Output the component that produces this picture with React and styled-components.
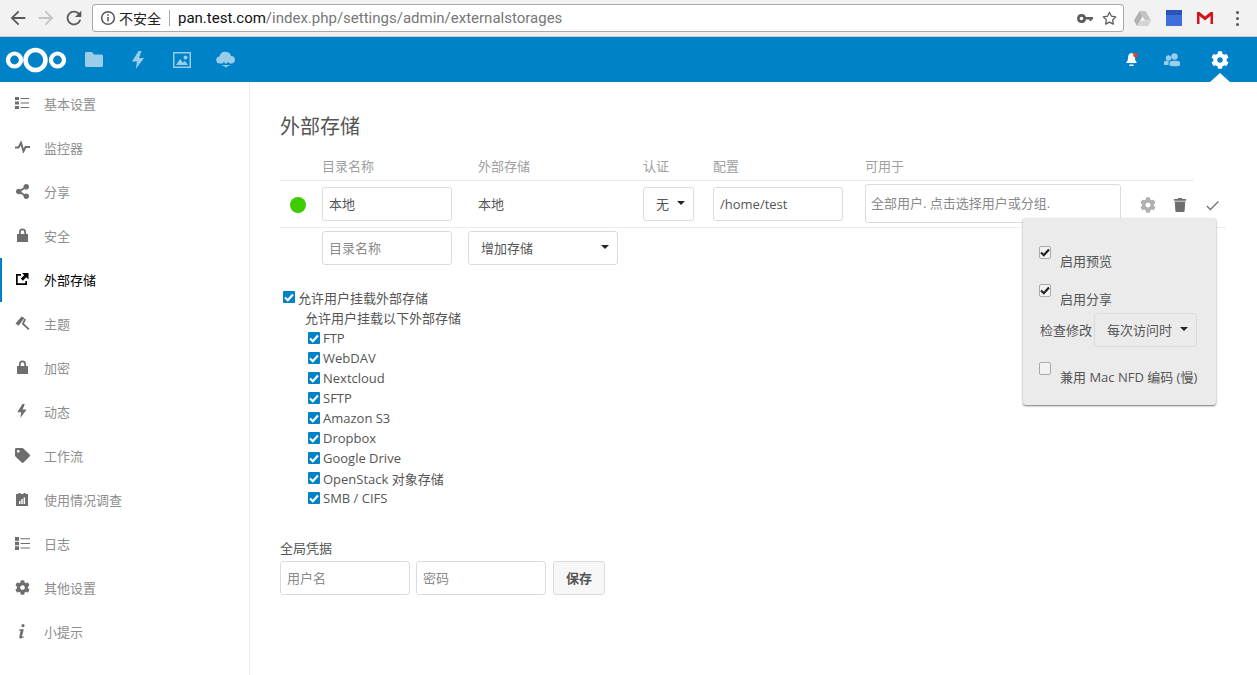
import React from "react";
import styled, { createGlobalStyle } from "styled-components";
import { FaCog, FaShareAlt, FaTag, FaTrash } from "react-icons/fa";
import { FiStar } from "react-icons/fi";
import { MdCheck, MdRefresh, MdArrowBack, MdArrowForward } from "react-icons/md";

const GlobalStyle = createGlobalStyle`
  html, body {
    margin: 0;
    padding: 0;
    background: #fff;
  }
  body {
    font-family: "Open Sans", "Noto Sans CJK SC", sans-serif;
    font-size: 13px;
    color: #555;
    overflow: hidden;
  }
  * {
    box-sizing: border-box;
  }
`;

const Page = styled.div`
  width: 1257px;
  height: 675px;
  display: flex;
  flex-direction: column;
  overflow: hidden;
`;

/* browser chrome */
const BrowserBar = styled.div`
  height: 37px;
  flex: none;
  display: flex;
  align-items: flex-start;
  padding: 4px 0 0 0;
  background: #f2f2f2;
  border-bottom: 1px solid #c9c9c9;
`;

const NavGroup = styled.div`
  width: 92px;
  flex: none;
  display: flex;
  padding-left: 4px;
`;

const NavButton = styled.div`
  width: 28px;
  height: 28px;
  flex: none;
  display: flex;
  align-items: center;
  justify-content: center;
  color: ${(props) => (props.$off ? "#c4c4c4" : "#5a5a5a")};
  font-size: 22px;
`;

const Omnibox = styled.div`
  width: 1032px;
  height: 28px;
  flex: none;
  display: flex;
  align-items: center;
  padding: 0 6px 0 7px;
  background: #fff;
  border: 1px solid #a9a9a9;
  border-radius: 3px;
  font-family: "Roboto", "Noto Sans CJK SC", sans-serif;
  font-size: 15px;
  color: #777;
`;

const SecurityText = styled.span`
  margin-left: 3px;
  color: #222;
  font-size: 14px;
  font-family: "Noto Sans CJK SC", sans-serif;
`;

const UrlDivider = styled.span`
  width: 1px;
  height: 16px;
  margin: 0 8px 0 8px;
  background: #a8a8a8;
`;

const UrlHost = styled.span`
  color: #111;
`;

const OmniboxIcons = styled.div`
  margin-left: auto;
  display: flex;
  align-items: center;
  gap: 9px;
  color: #5c5c5c;
`;

const Extensions = styled.div`
  flex: 1;
  height: 28px;
  display: flex;
  align-items: center;
  padding-left: 10px;
  gap: 15px;
`;

const Menu = styled.div`
  margin-left: 8px;
  display: flex;
  flex-direction: column;
  gap: 3px;
  span {
    width: 3px;
    height: 3px;
    border-radius: 50%;
    background: #555;
  }
`;

/* nextcloud header */
const Header = styled.header`
  height: 45px;
  flex: none;
  display: flex;
  align-items: center;
  background: #0082c9;
`;

const Logo = styled.div`
  width: 72px;
  flex: none;
  padding-left: 6px;
  display: flex;
  align-items: center;
`;

const AppIcon = styled.div`
  width: ${(props) => props.$width || 44}px;
  height: 45px;
  flex: none;
  display: flex;
  align-items: center;
  justify-content: center;
  color: #fff;
  opacity: ${(props) => (props.$dim ? 0.6 : 1)};
  font-size: 18px;
`;

const HeaderRight = styled.div`
  margin-left: auto;
  display: flex;
  padding-right: 15px;
`;

const SettingsButton = styled(AppIcon)`
  position: relative;
  margin-left: 4px;
  &::after {
    content: "";
    position: absolute;
    left: 12px;
    bottom: 0;
    border-left: 10px solid transparent;
    border-right: 10px solid transparent;
    border-bottom: 9px solid #fff;
  }
`;

const Body = styled.div`
  flex: 1;
  display: flex;
  min-height: 0;
`;

const Sidebar = styled.nav`
  width: 250px;
  flex: none;
  border-right: 1px solid #ebebeb;
`;

const NavItem = styled.a`
  height: 44px;
  display: flex;
  align-items: center;
  padding-bottom: 2px;
  border-left: 2px solid ${(props) => (props.$active ? "#0082c9" : "transparent")};
  color: ${(props) => (props.$active ? "#000" : "#8e8e8e")};
  font-size: 13px;
`;

const NavIcon = styled.span`
  width: 42px;
  padding-right: 2px;
  flex: none;
  display: flex;
  align-items: center;
  justify-content: center;
  color: ${(props) => (props.$active ? "#000" : "#6e6e6e")};
  font-size: 15px;
`;

const Main = styled.main`
  flex: 1;
  position: relative;
  padding: 31px 0 0 30px;
`;

const Title = styled.h2`
  margin: 0 0 13px 0;
  height: 28px;
  font-size: 20px;
  line-height: 28px;
  font-weight: 400;
  color: #555;
`;

const TableHead = styled.div`
  width: 914px;
  height: 27px;
  display: flex;
  align-items: center;
  padding-bottom: 4px;
  border-bottom: 1px solid #ededed;
  color: #a0a0a0;
`;

const TableRow = styled.div`
  width: 946px;
  height: ${(props) => props.$height}px;
  display: flex;
  align-items: center;
  border-bottom: ${(props) => (props.$line ? "1px solid #ededed" : "none")};
`;

const Cell = styled.div`
  width: ${(props) => props.$width}px;
  flex: none;
  padding-left: ${(props) => props.$pad || 0}px;
  padding-bottom: ${(props) => props.$lift || 0}px;
  display: flex;
  align-items: center;
`;

const Dot = styled.span`
  width: 16px;
  height: 16px;
  margin: 1px 0 0 10px;
  border-radius: 50%;
  background: #3ecb00;
`;

const Input = styled.div`
  width: ${(props) => props.$width || 130}px;
  height: ${(props) => props.$height || 34}px;
  margin-bottom: ${(props) => props.$raise || 0}px;
  flex: none;
  display: flex;
  align-items: center;
  padding: 0 0 ${(props) => (props.$latin ? 0 : 2)}px ${(props) => props.$left || 6}px;
  background: #fff;
  border: 1px solid #dbdbdb;
  border-radius: 3px;
  color: ${(props) => (props.$placeholder ? "#8a8a8a" : "#555")};
  white-space: nowrap;
  overflow: hidden;
`;

const Select = styled.div`
  width: ${(props) => props.$width}px;
  height: 34px;
  flex: none;
  display: flex;
  align-items: center;
  justify-content: space-between;
  padding: 0 ${(props) => props.$right}px 2px 12px;
  background: ${(props) => (props.$grey ? "#ebebeb" : "#fff")};
  border: 1px solid #dbdbdb;
  border-radius: 3px;
  color: #555;
  white-space: nowrap;
  &::after {
    content: "";
    border-left: 4px solid transparent;
    border-right: 4px solid transparent;
    border-top: 4px solid #222;
  }
`;

const Actions = styled.div`
  display: flex;
  align-items: center;
  padding: 2px 0 0 11px;
`;

const ActionIcon = styled.span`
  width: 32px;
  flex: none;
  display: flex;
  justify-content: center;
  color: ${(props) => props.$color};
  font-size: ${(props) => props.$size || 16}px;
`;

const Options = styled.div`
  position: absolute;
  top: 136px;
  left: 773px;
  width: 193px;
  height: 187px;
  padding: 0 0 0 17px;
  background: #ebebeb;
  border-radius: 3px;
  box-shadow: 0 1px 2px #777;
  color: #555;
`;

const OptionRow = styled.div`
  height: ${(props) => props.$height}px;
  display: flex;
  align-items: flex-start;
`;

const PlainBox = styled.span`
  width: 12px;
  height: 13px;
  margin: ${(props) => props.$top}px 9px 0 -1px;
  flex: none;
  display: flex;
  align-items: center;
  justify-content: center;
  background: #f2f2f2;
  border: 1px solid #aaa;
  border-radius: 2px;
  color: #222;
`;

const OptionLabel = styled.span`
  margin-top: ${(props) => props.$top}px;
  white-space: nowrap;
  line-height: 20px;
`;

const SelectLabel = styled.span`
  margin-right: 2px;
  padding-bottom: 2px;
`;

const OptionSelectRow = styled.div`
  display: flex;
  align-items: center;
  height: 34px;
  margin: 0 0 15px 0;
`;

const MountSettings = styled.div`
  margin: 20px 0 0 3px;
`;

const CheckLine = styled.div`
  height: 20px;
  display: flex;
  align-items: center;
  padding-left: ${(props) => props.$indent || 0}px;
  padding-bottom: ${(props) => (props.$cjk ? 2 : 0)}px;
  white-space: nowrap;
`;

const BlueBox = styled.span`
  width: 12px;
  height: 12px;
  margin-right: 3px;
  flex: none;
  display: flex;
  align-items: center;
  justify-content: center;
  background: #0082c9;
  border-radius: 1px;
`;

const Credentials = styled.div`
  margin-top: 30px;
`;

const CredentialsLabel = styled.div`
  height: 20px;
  line-height: 20px;
  margin-bottom: 3px;
`;

const CredentialsRow = styled.div`
  display: flex;
  align-items: center;
  gap: 6px;
`;

const SaveButton = styled.div`
  width: 52px;
  height: 34px;
  margin-left: 1px;
  padding-bottom: 2px;
  display: flex;
  align-items: center;
  justify-content: center;
  background: #f7f7f7;
  border: 1px solid #dbdbdb;
  border-radius: 3px;
  font-weight: 700;
  color: #555;
`;

const ListIcon = () => (
  <svg width="14" height="12" viewBox="0 0 14 12" fill="currentColor">
    <path d="M0 0h4v3H0zM0 4.500h4v3H0zM0 9h4v3H0zM5.500 1H14v1.100H5.500zM5.500 5.500H14v1.100H5.500zM5.500 10H14v1.100H5.500z" />
  </svg>
);

const ActivityIcon = () => (
  <svg width="15" height="12" viewBox="0 0 15 12" fill="none" stroke="currentColor" strokeWidth="2">
    <path d="M0 6.500h3.500L6 1.800l2.500 8.500 2-4.300H15" />
  </svg>
);

const LockIcon = () => (
  <svg width="11" height="14" viewBox="0 0 11 14" fill="currentColor">
    <path fillRule="evenodd" d="M2 6V4a3.500 3.500 0 0 1 7 0v2h2v8H0V6zM3.700 6h3.600V4a1.800 1.800 0 0 0-3.600 0z" />
  </svg>
);

const ExternalIcon = () => (
  <svg width="14" height="14" viewBox="0 0 14 14" fill="currentColor">
    <path d="M1 2h5v1.700H2.700v7.600h7.600V9H12v4H1z" />
    <path d="M7 1h6.500v6.500L11.300 5.300l-3.400 3.400-2.100-2.100 3.400-3.400z" />
  </svg>
);

const BrushIcon = () => (
  <svg width="15" height="14" viewBox="0 0 15 14" fill="currentColor">
    <path d="M0.500 7.500 6.500 0.500 9.500 2 3.500 9.800z" />
    <path d="M9.500 2.500 11 3.500 9 7.500 14.500 12.800 13.300 14 6.800 8z" />
  </svg>
);

const BoltIcon = ({ width = 12, height = 14 }) => (
  <svg width={width} height={height} viewBox="0 0 12 18" fill="currentColor">
    <path d="M6.500 0 0 10.500h5L3.800 18 12 7H7L9.500 0z" />
  </svg>
);

const ClipboardIcon = () => (
  <svg width="12" height="13" viewBox="0 0 12 13" fill="currentColor">
    <path fillRule="evenodd" d="M0 1h2.500V0h2v1h3V0h2v1H12v12H0zM3 8v3h1.500V8zM5.300 6v5h1.500V6zM7.600 4.500V11h1.500V4.500z" />
  </svg>
);

const LogIcon = () => (
  <svg width="15" height="13" viewBox="0 0 15 13" fill="currentColor">
    <path d="M0 0h4v3.700H0zM0 4.700h4v3.600H0zM0 9.300h4V13H0zM5.500 1.300H15v1H5.500zM5.500 6H15v1H5.500zM5.500 10.600H15v1H5.500z" />
  </svg>
);

const InfoItalic = () => (
  <svg width="8" height="15" viewBox="0 0 8 15" fill="currentColor">
    <circle cx="5" cy="1.600" r="1.600" />
    <path d="M1.500 5.300h4.300L4 12.300c-.1.500.4.500 1.800 0v1C4 14.500.8 15.300 1.300 12.700l1.300-5.900H1.200z" />
  </svg>
);

const NextcloudLogo = () => (
  <svg width="60" height="26" viewBox="0 0 60 26" fill="none" stroke="#fff">
    <circle cx="29.500" cy="13" r="10" strokeWidth="4.600" />
    <circle cx="8.500" cy="13" r="6.500" strokeWidth="4.200" />
    <circle cx="51.500" cy="13" r="6.500" strokeWidth="4.200" />
  </svg>
);

const FolderIcon = () => (
  <svg width="18" height="15" viewBox="0 0 18 15" fill="currentColor">
    <path d="M0 1.500C0 .7.700 0 1.500 0H7l2 2.500h7.500c.8 0 1.500.7 1.500 1.500v9.500c0 .8-.7 1.500-1.500 1.500h-15C.7 15 0 14.300 0 13.500z" />
  </svg>
);

const ImageIcon = () => (
  <svg width="18" height="16" viewBox="0 0 18 16" fill="currentColor">
    <path fillRule="evenodd" d="M0 0h18v16H0zM1.500 1.500v13h15v-13zM3 13l4-6 3 3.500 2-1.500 3 4zM12.500 3.500a2 2 0 1 1 0 4 2 2 0 0 1 0-4z" />
  </svg>
);

const CloudIcon = () => (
  <svg width="20" height="17" viewBox="0 0 20 17" fill="currentColor">
    <path fillRule="evenodd" d="M4 12.500a3.500 3.500 0 0 1-.5-7A5 5 0 0 1 10 1a5 5 0 0 1 5 4 3.800 3.800 0 0 1 1 7.500h-2.500L10 8.500l-3.500 4z" />
    <path d="M9 6h2v4h2l-3 3-3-3h2zM6.500 14h7v1h-2L10 17l-1.500-2h-2z" />
  </svg>
);

const BellIcon = () => (
  <svg width="14" height="15" viewBox="0 0 14 15">
    <path fill="#fff" d="M6.500 1C3.500 1.500 3 4 3 6.500 3 9 1.500 10 1 11h11c-.5-1-2-2-2-4.500C10 4 9.500 1.500 6.500 1zM4.500 12.500h4v1.500h-4z" />
    <circle cx="10.500" cy="3" r="2.300" fill="#e2431e" />
  </svg>
);

const UsersIcon = () => (
  <svg width="16" height="14" viewBox="0 0 16 14" fill="currentColor">
    <circle cx="10.500" cy="3.500" r="3.200" />
    <circle cx="4.500" cy="5" r="2.700" />
    <path d="M5.500 9c1-1.500 9-1.700 10.500 0v3.500c0 1-10.500 1-10.500 0zM0 8.500c.8-1 3.500-1 4.500-.5v4H1c-.5 0-1-.3-1-1z" />
  </svg>
);

const InfoCircle = () => (
  <svg width="16" height="16" viewBox="0 0 16 16" fill="none" stroke="#555" strokeWidth="1.500">
    <circle cx="8" cy="8" r="6.300" />
    <path d="M8 7v4.500M8 4.200v1.600" />
  </svg>
);

const KeyIcon = () => (
  <svg width="16" height="9" viewBox="0 0 16 9" fill="#5c5c5c">
    <path fillRule="evenodd" d="M4.500 0A4.500 4.500 0 0 1 9 3h7v2.500h-1.500V7h-2V5.500H9A4.500 4.500 0 1 1 4.500 0zM4.500 2.700a1.800 1.800 0 1 0 0 3.600 1.800 1.800 0 0 0 0-3.600z" />
  </svg>
);

const DriveIcon = () => (
  <svg width="17" height="15" viewBox="0 0 17 15">
    <path fill="#c2c2c2" d="M5.500 0h6L17 9.500h-6z" />
    <path fill="#b0b0b0" d="M5.500 0 0 9.500 3 15l5.500-9.500z" />
    <path fill="#d4d4d4" d="M3 15h11l3-5H6z" />
  </svg>
);

const CalendarIcon = () => (
  <svg width="16" height="16" viewBox="0 0 16 16">
    <rect width="16" height="16" fill="#3f6fdb" />
    <rect width="16" height="5" fill="#2a54b8" />
  </svg>
);

const GmailIcon = () => (
  <svg width="16" height="12" viewBox="0 0 16 12">
    <rect width="16" height="12" fill="#f4f4f4" />
    <path fill="#d4141b" d="M0 0h2.500L8 4.500 13.500 0H16v12h-2.500V4L8 8.500 2.500 4v8H0z" />
  </svg>
);

const CheckMark = ({ color }) => (
  <svg width="10" height="9" viewBox="0 0 10 9" fill="none" stroke={color} strokeWidth="2.200">
    <path d="M1 4.500 3.800 7.200 9 1.500" />
  </svg>
);

const SIDEBAR = [
  { label: "基本设置", icon: <ListIcon /> },
  { label: "监控器", icon: <ActivityIcon /> },
  { label: "分享", icon: <FaShareAlt /> },
  { label: "安全", icon: <LockIcon /> },
  { label: "外部存储", icon: <ExternalIcon />, active: true },
  { label: "主题", icon: <BrushIcon /> },
  { label: "加密", icon: <LockIcon /> },
  { label: "动态", icon: <BoltIcon /> },
  { label: "工作流", icon: <FaTag /> },
  { label: "使用情况调查", icon: <ClipboardIcon /> },
  { label: "日志", icon: <LogIcon /> },
  { label: "其他设置", icon: <FaCog /> },
  { label: "小提示", icon: <InfoItalic /> },
];

const BACKENDS = [
  "FTP",
  "WebDAV",
  "Nextcloud",
  "SFTP",
  "Amazon S3",
  "Dropbox",
  "Google Drive",
  "OpenStack 对象存储",
  "SMB / CIFS",
];

const Blue = () => (
  <BlueBox>
    <CheckMark color="#fff" />
  </BlueBox>
);

const App = () => {
  return (
    <Page>
      <GlobalStyle />
      <BrowserBar>
        <NavGroup>
          <NavButton>
            <MdArrowBack />
          </NavButton>
          <NavButton $off>
            <MdArrowForward />
          </NavButton>
          <NavButton>
            <MdRefresh />
          </NavButton>
        </NavGroup>
        <Omnibox>
          <InfoCircle />
          <SecurityText>不安全</SecurityText>
          <UrlDivider />
          <UrlHost>pan.test.com</UrlHost>
          /index.php/settings/admin/externalstorages
          <OmniboxIcons>
            <KeyIcon />
            <FiStar size={15} />
          </OmniboxIcons>
        </Omnibox>
        <Extensions>
          <DriveIcon />
          <CalendarIcon />
          <GmailIcon />
          <Menu>
            <span />
            <span />
            <span />
          </Menu>
        </Extensions>
      </BrowserBar>
      <Header>
        <Logo>
          <NextcloudLogo />
        </Logo>
        <AppIcon $dim>
          <FolderIcon />
        </AppIcon>
        <AppIcon $dim>
          <BoltIcon height={18} />
        </AppIcon>
        <AppIcon $dim>
          <ImageIcon />
        </AppIcon>
        <AppIcon $dim>
          <CloudIcon />
        </AppIcon>
        <HeaderRight>
          <AppIcon $width={36}>
            <BellIcon />
          </AppIcon>
          <AppIcon $dim>
            <UsersIcon />
          </AppIcon>
          <SettingsButton>
            <FaCog />
          </SettingsButton>
        </HeaderRight>
      </Header>
      <Body>
        <Sidebar>
          {SIDEBAR.map((item) => (
            <NavItem key={item.label} $active={item.active}>
              <NavIcon $active={item.active}>{item.icon}</NavIcon>
              {item.label}
            </NavItem>
          ))}
        </Sidebar>
        <Main>
          <Title>外部存储</Title>
          <TableHead>
            <Cell $width={42} />
            <Cell $width={146}>目录名称</Cell>
            <Cell $width={175} $pad={10}>外部存储</Cell>
            <Cell $width={70}>认证</Cell>
            <Cell $width={152}>配置</Cell>
            <Cell $width={200}>可用于</Cell>
          </TableHead>
          <TableRow $height={47} $line>
            <Cell $width={42}>
              <Dot />
            </Cell>
            <Cell $width={146}>
              <Input>本地</Input>
            </Cell>
            <Cell $width={175} $pad={10} $lift={2}>本地</Cell>
            <Cell $width={70}>
              <Select $width={51} $right={8}>无</Select>
            </Cell>
            <Cell $width={152}>
              <Input $latin>/home/test</Input>
            </Cell>
            <Cell $width={256}>
              <Input $width={256} $height={39} $raise={1} $left={5} $placeholder>
                全部用户. 点击选择用户或分组.
              </Input>
            </Cell>
            <Actions>
              <ActionIcon $color="#b0b0b0">
                <FaCog />
              </ActionIcon>
              <ActionIcon $color="#6e6e6e" $size={14}>
                <FaTrash />
              </ActionIcon>
              <ActionIcon $color="#777" $size={17}>
                <MdCheck />
              </ActionIcon>
            </Actions>
          </TableRow>
          <TableRow $height={40}>
            <Cell $width={42} />
            <Cell $width={146}>
              <Input $placeholder>目录名称</Input>
            </Cell>
            <Cell $width={175}>
              <Select $width={150} $right={8}>增加存储</Select>
            </Cell>
          </TableRow>
          <Options>
            <OptionRow $height={66}>
              <PlainBox $top={28}>
                <CheckMark color="#222" />
              </PlainBox>
              <OptionLabel $top={33}>启用预览</OptionLabel>
            </OptionRow>
            <OptionRow $height={29}>
              <PlainBox $top={0}>
                <CheckMark color="#222" />
              </PlainBox>
              <OptionLabel $top={5}>启用分享</OptionLabel>
            </OptionRow>
            <OptionSelectRow>
              <SelectLabel>检查修改</SelectLabel>
              <Select $grey $width={103} $right={8}>每次访问时</Select>
            </OptionSelectRow>
            <OptionRow $height={30}>
              <PlainBox $top={0} />
              <OptionLabel $top={5}>兼用 Mac NFD 编码 (慢)</OptionLabel>
            </OptionRow>
          </Options>
          <MountSettings>
            <CheckLine $cjk>
              <Blue />
              允许用户挂载外部存储
            </CheckLine>
            <CheckLine $indent={22} $cjk>允许用户挂载以下外部存储</CheckLine>
            {BACKENDS.map((name) => (
              <CheckLine key={name} $indent={25}>
                <Blue />
                {name}
              </CheckLine>
            ))}
          </MountSettings>
          <Credentials>
            <CredentialsLabel>全局凭据</CredentialsLabel>
            <CredentialsRow>
              <Input $placeholder>用户名</Input>
              <Input $placeholder>密码</Input>
              <SaveButton>保存</SaveButton>
            </CredentialsRow>
          </Credentials>
        </Main>
      </Body>
    </Page>
  );
};

export default App;
